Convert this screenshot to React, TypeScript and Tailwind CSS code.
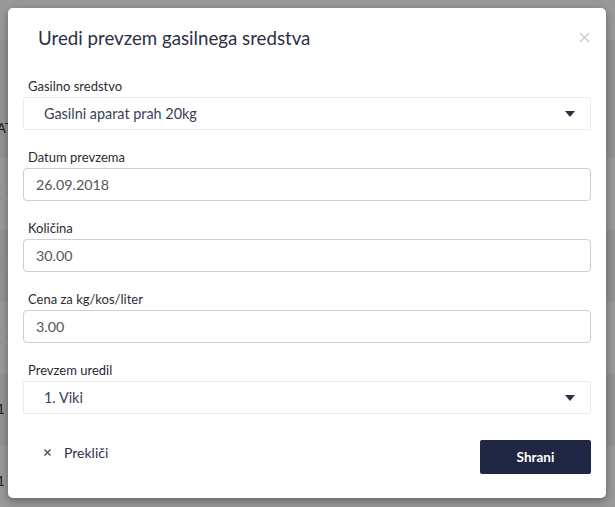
import React from "react";

const fields = [
  { label: "Datum prevzema", value: "26.09.2018" },
  { label: "Količina", value: "30.00" },
  { label: "Cena za kg/kos/liter", value: "3.00" },
];

const rows = ["A", "(", "(", "(", "1", "1"];

function Caret() {
  return (
    <svg width="10" height="6" viewBox="0 0 10 6" className="shrink-0">
      <path d="M0 0h10L5 6z" fill="#2a2f45" />
    </svg>
  );
}

function SelectBox({ label, value }: { label: string; value: string }) {
  return (
    <div className="flex flex-col">
      <label className="pl-[5px] text-[13px] leading-[18px] mb-[2px] text-[#2b2b33]">{label}</label>
      <div className="h-[33px] flex items-center justify-between border border-[#ececec] rounded-[2px] pl-[20px] pr-[15px]">
        <span className="text-[14.4px] text-[#3a3f58]">{value}</span>
        <Caret />
      </div>
    </div>
  );
}

function TextInput({ label, value }: { label: string; value: string }) {
  return (
    <div className="flex flex-col">
      <label className="pl-[5px] text-[13px] leading-[18px] mb-[2px] text-[#2b2b33]">{label}</label>
      <div className="h-[33px] flex items-center border border-[#cfcfcf] rounded-[4px] px-[12px]">
        <span className="text-[14.3px] text-[#555]">{value}</span>
      </div>
    </div>
  );
}

export default function App() {
  return (
    <div className="relative w-[615px] h-[507px] overflow-hidden bg-white" style={{ fontFamily: "Lato, 'Noto Sans', sans-serif" }}>
      {/* page behind the modal */}
      <div className="flex flex-col">
        <div className="h-[40px] bg-white" />
        <div className="h-[118px] bg-[#f4f4f4] flex items-center justify-between text-[13px] text-[#3b2a20]">
          <span className="-ml-[3px] pt-[60px]">AT</span>
          <span className="pr-[8px] pt-[60px] text-[#aaa]">↑</span>
        </div>
        {rows.slice(1).map((r, i) => (
          <div
            key={i}
            className={`h-[72px] flex items-center text-[13px] text-[#3b2a20] ${i % 2 === 0 ? "bg-white" : "bg-[#f4f4f4]"}`}
          >
            <span className="-ml-[3px]">{r}</span>
          </div>
        ))}
      </div>
      <div className="absolute inset-0 bg-black/40" />

      {/* modal */}
      <div className="absolute left-[8px] top-[8px] w-[598px] h-[490px] bg-white rounded-[5px] shadow-[0_3px_9px_rgba(0,0,0,0.35)] flex flex-col">
        <div className="flex items-center justify-between pt-[18px] pl-[30px] pr-[16px]">
          <h2 className="text-[18.7px] leading-[24px] text-[#2b3046]">Uredi prevzem gasilnega sredstva</h2>
          <svg width="11" height="11" viewBox="0 0 11 11" className="-mt-[1px]">
            <path d="M1 1l9 9M10 1l-9 9" stroke="#c9c9c9" strokeWidth="1.3" />
          </svg>
        </div>
        <div className="flex flex-col gap-[18px] px-[15px] mt-[27px]">
          <SelectBox label="Gasilno sredstvo" value="Gasilni aparat prah 20kg" />
          {fields.map((f) => (
            <TextInput key={f.label} label={f.label} value={f.value} />
          ))}
          <SelectBox label="Prevzem uredil" value="1. Viki" />
        </div>
        <div className="flex items-center justify-between px-[15px] mt-[26px]">
          <button className="flex items-center gap-[13px] pl-[21px] mb-[9px] text-[14px] text-[#2d3250]">
            <svg width="7" height="7" viewBox="0 0 7 7">
              <path d="M0.5 0.5l6 6M6.5 0.5l-6 6" stroke="#3a3f58" strokeWidth="1.1" />
            </svg>
            Prekliči
          </button>
          <button className="w-[111px] h-[34px] bg-[#1f2744] rounded-[2px] text-white text-[13.5px] font-bold">Shrani</button>
        </div>
      </div>
    </div>
  );
}
